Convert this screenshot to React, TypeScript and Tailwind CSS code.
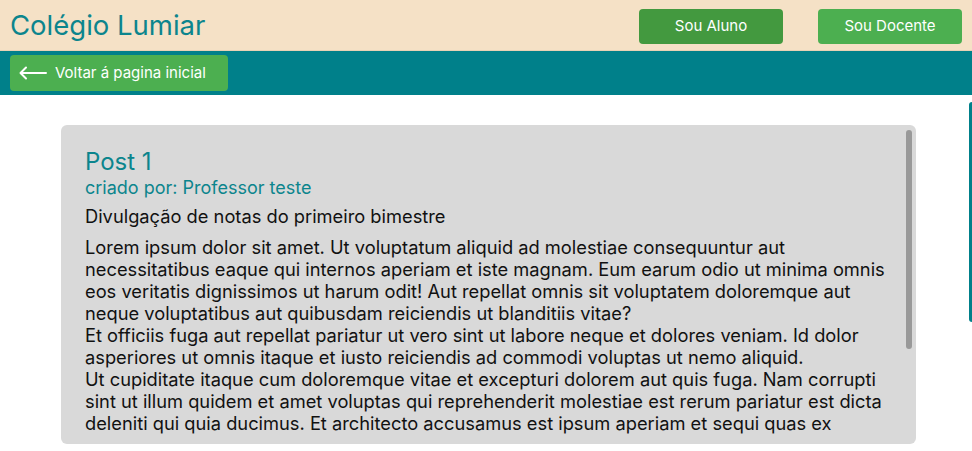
import React from "react";

const lines = [
  "Lorem ipsum dolor sit amet. Ut voluptatum aliquid ad molestiae consequuntur aut",
  "necessitatibus eaque qui internos aperiam et iste magnam. Eum earum odio ut minima omnis",
  "eos veritatis dignissimos ut harum odit! Aut repellat omnis sit voluptatem doloremque aut",
  "neque voluptatibus aut quibusdam reiciendis ut blanditiis vitae?",
  "Et officiis fuga aut repellat pariatur ut vero sint ut labore neque et dolores veniam. Id dolor",
  "asperiores ut omnis itaque et iusto reiciendis ad commodi voluptas ut nemo aliquid.",
  "Ut cupiditate itaque cum doloremque vitae et excepturi dolorem aut quis fuga. Nam corrupti",
  "sint ut illum quidem et amet voluptas qui reprehenderit molestiae est rerum pariatur est dicta",
  "deleniti qui quia ducimus. Et architecto accusamus est ipsum aperiam et sequi quas ex",
];

export default function App() {
  return (
    <div className="relative h-[451px] w-[972px] overflow-hidden bg-white font-['Inter',sans-serif]">
      <header className="flex h-[51px] items-center justify-between border-b border-[#e8d2b5] bg-[#f5e1c6] pl-[10px] pr-[10px]">
        <h1 className="pt-[2px] text-[27.5px] leading-none text-[#0c858d]">Colégio Lumiar</h1>
        <div className="flex gap-[35px] pt-[2px]">
          <button className="h-[35px] w-[144px] rounded-[4px] bg-[#43993f] text-[15px] text-white">Sou Aluno</button>
          <button className="h-[35px] w-[144px] rounded-[4px] bg-[#4caf50] text-[15px] text-white">Sou Docente</button>
        </div>
      </header>
      <nav className="flex h-[44px] items-center bg-[#00808a] px-[10px]">
        <button className="flex h-[36px] w-[218px] items-center gap-[8px] rounded-[4px] bg-[#4caf50] pl-[9px] text-[15px] text-white">
          <svg width="28" height="14" viewBox="0 0 28 14" fill="none" stroke="white" strokeWidth="2" strokeLinecap="round" strokeLinejoin="round">
            <path d="M27 7H2M7 1.5L1.5 7L7 12.5" />
          </svg>
          <span>Voltar á pagina inicial</span>
        </button>
      </nav>
      <main className="pt-[30px]">
        <div className="relative ml-[61px] flex h-[319px] w-[855px] flex-col overflow-hidden rounded-[6px] bg-[#d9d9d9] px-[24px] pb-[10px] pt-[22px]">
          <div className="min-h-0 flex-1 overflow-hidden">
            <h2 className="text-[24px] leading-[30px] text-[#0c858d]">Post 1</h2>
            <p className="text-[18px] leading-[22px] text-[#0c858d]">criado por: Professor teste</p>
            <p className="mt-[6px] text-[18.3px] leading-[22px] text-[#111]">Divulgação de notas do primeiro bimestre</p>
            <div className="mt-[9px] text-[18.3px] leading-[22px] text-[#111]">
              {lines.map((t, i) => (
                <span key={i} className="block whitespace-nowrap">
                  {t}
                </span>
              ))}
            </div>
          </div>
          <div className="absolute right-[4px] top-[5px] h-[219px] w-[6px] rounded-full bg-[#999]" />
        </div>
      </main>
      <div className="absolute left-[969px] top-[102px] h-[220px] w-[10px] rounded-l-[3px] bg-[#00808a]" />
    </div>
  );
}
